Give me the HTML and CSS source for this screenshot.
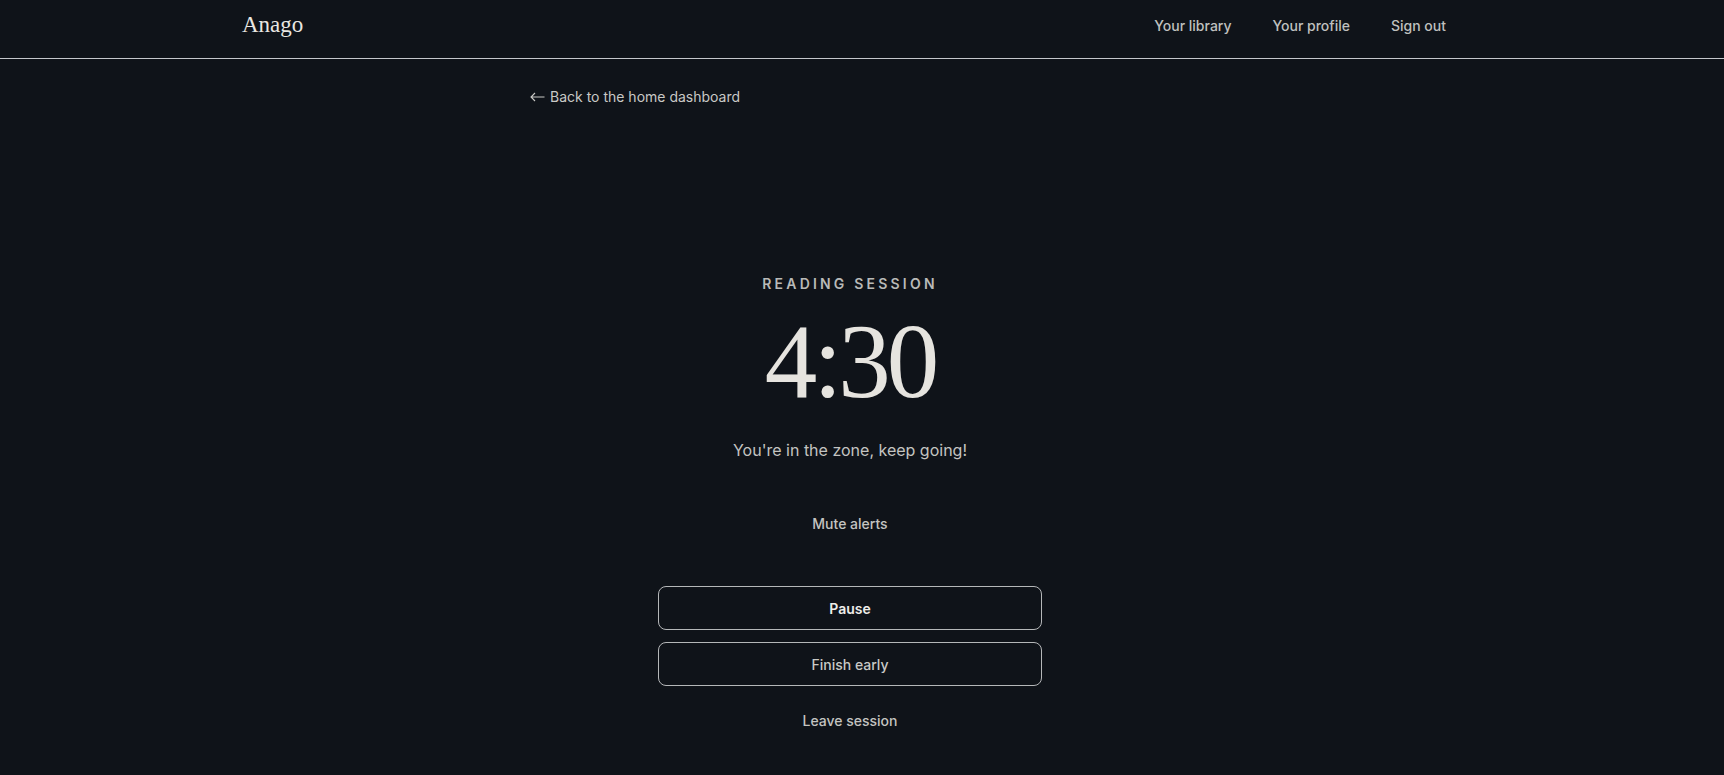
FILE: index.html
```html
<!DOCTYPE html>
<html lang="en">
<head>
<meta charset="utf-8"/>
<title>Reading session - Anago</title>
<link rel="stylesheet" href="styles.css">
</head>
<body>
<header class="topbar">
  <div class="topbar-inner">
    <a class="logo" href="#">Anago</a>
    <nav class="nav">
      <a href="#">Your library</a>
      <a href="#">Your profile</a>
      <a href="#">Sign out</a>
    </nav>
  </div>
</header>
<main class="page">
  <a class="back" href="#"><svg class="arrow" width="15" height="10" viewBox="0 0 15 10"><path d="M14.5 5H1M5 1L1 5l4 4" fill="none" stroke="currentColor" stroke-width="1.1"/></svg>Back to the home dashboard</a>
  <section class="session">
    <p class="eyebrow">Reading session</p>
    <div class="timer">4:30</div>
    <p class="status">You're in the zone, keep going!</p>
    <button class="link-btn mute" type="button">Mute alerts</button>
    <div class="actions">
      <button class="btn primary" type="button">Pause</button>
      <button class="btn" type="button">Finish early</button>
      <button class="link-btn leave" type="button">Leave session</button>
    </div>
  </section>
</main>
</body>
</html>
```

FILE: styles.css
```css
body {
  margin: 0;
  background: #0f1319;
  color: #c9c9c6;
  font-family: Inter, "Noto Sans", sans-serif;
}
a {
  color: inherit;
  text-decoration: none;
}
.topbar {
  height: 58px;
  padding-right: 24px;
  border-bottom: 1px solid #c4c7cb;
}
.topbar-inner {
  max-width: 1216px;
  height: 100%;
  margin: 0 auto;
  padding-bottom: 8px;
  box-sizing: border-box;
  display: flex;
  align-items: center;
  justify-content: space-between;
}
.logo {
  font-family: "Liberation Serif", serif;
  font-size: 23px;
  color: #e9e7e2;
}
.nav {
  display: flex;
  gap: 41px;
  padding-right: 12px;
  font-size: 14px;
  font-weight: 500;
  color: #bfc0bf;
}
.page {
  width: 640px;
  margin: 0 auto;
  padding: 27px 24px 0 0;
}
.back {
  display: inline-flex;
  align-items: center;
  gap: 5px;
  font-size: 14px;
  color: #c9c9c6;
}
.arrow {
  margin-top: 1px;
}
.session {
  text-align: center;
  padding-top: 169px;
}
.eyebrow {
  margin: 0;
  font-size: 14px;
  font-weight: 600;
  letter-spacing: 3.2px;
  text-transform: uppercase;
  color: #b9bab8;
}
.timer {
  margin-top: 17px;
  font-family: "Liberation Serif", serif;
  font-size: 105px;
  line-height: 1;
  letter-spacing: -4px;
  color: #e6e4df;
}
.status {
  margin: 26px 0 0;
  font-size: 16px;
  color: #c4c4c1;
}
.link-btn {
  background: none;
  border: none;
  font-family: inherit;
  font-size: 14px;
  font-weight: 500;
  color: #c4c4c1;
  cursor: pointer;
  padding: 8px 12px;
}
.mute {
  margin-top: 47px;
}
.actions {
  width: 384px;
  margin: 46px auto 0;
  display: flex;
  flex-direction: column;
  gap: 12px;
  align-items: center;
}
.btn {
  width: 100%;
  height: 44px;
  background: transparent;
  border: 1px solid #b5b7b9;
  border-radius: 8px;
  font-family: inherit;
  font-size: 14px;
  font-weight: 500;
  color: #c9c9c6;
  cursor: pointer;
}
.btn.primary {
  font-weight: 600;
  color: #eeede9;
}
.leave {
  margin-top: 6px;
}
```
